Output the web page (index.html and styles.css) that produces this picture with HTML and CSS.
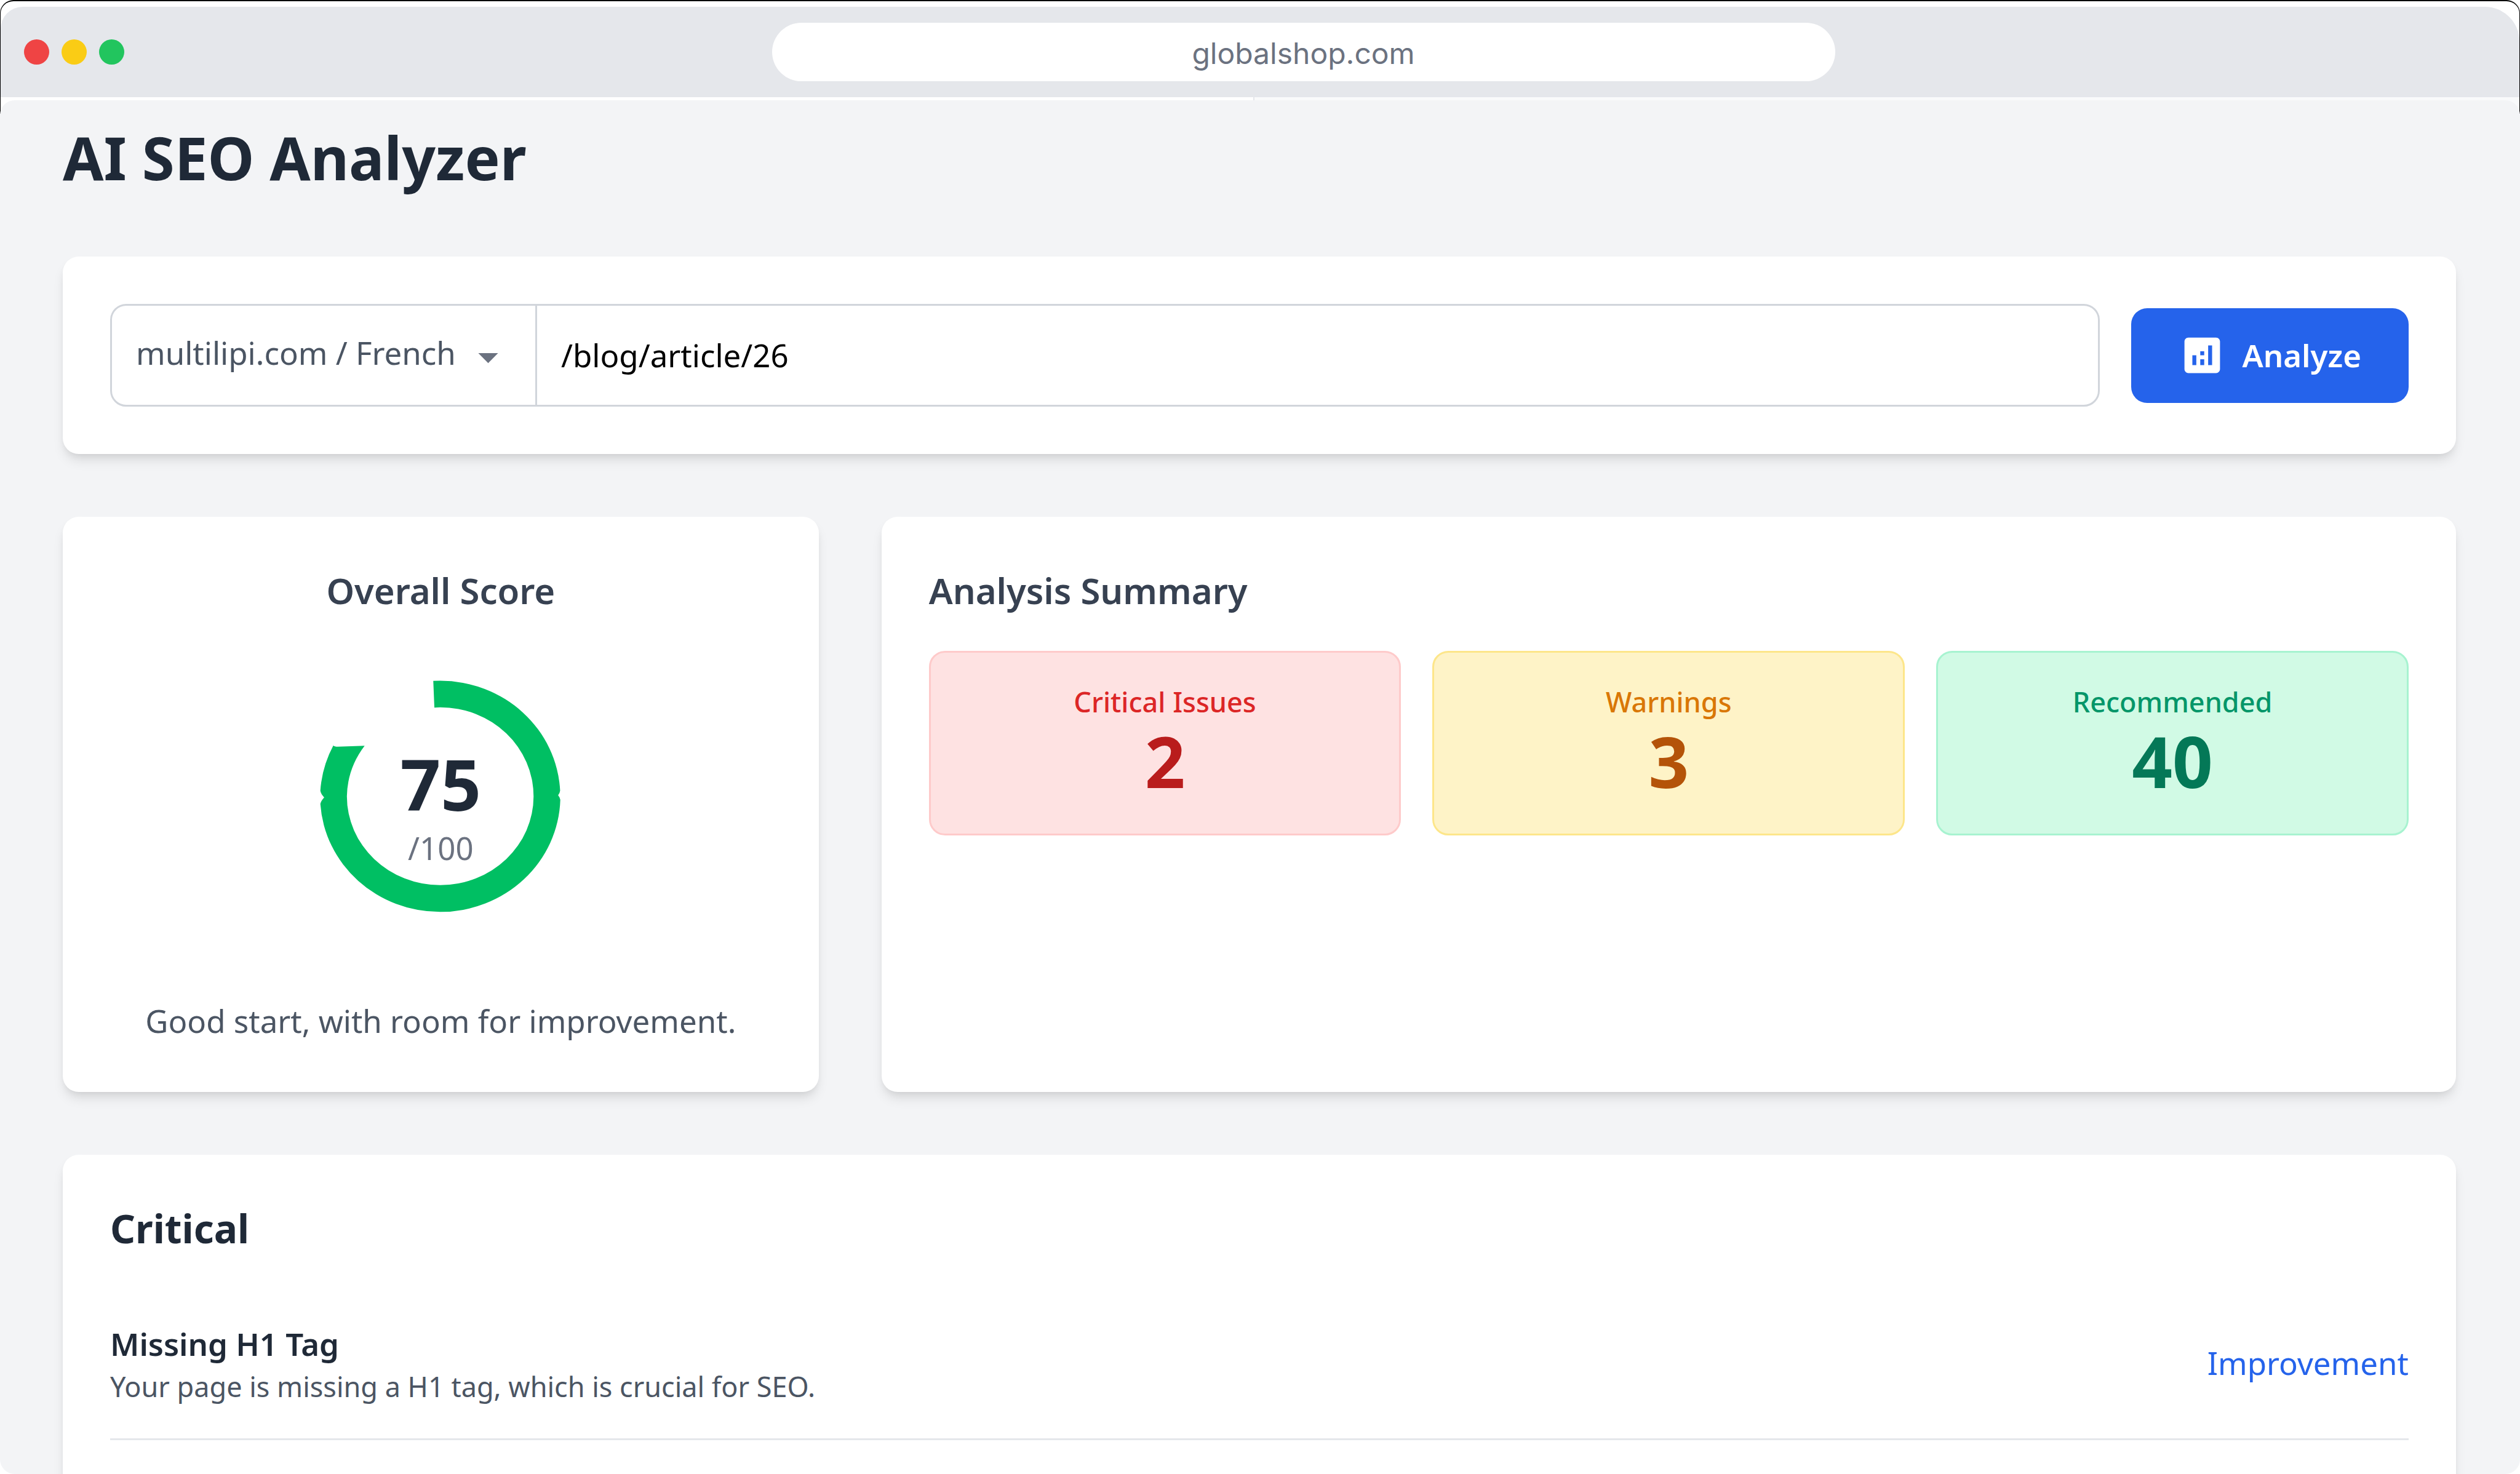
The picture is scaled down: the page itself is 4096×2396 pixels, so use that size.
FILE: index.html
```html
<!DOCTYPE html>
<html lang="en">
<head>
  <meta charset="UTF-8">
  <meta name="viewport" content="width=device-width, initial-scale=1.0">
  <title>AI SEO Analyzer</title>
  <link rel="stylesheet" href="styles.css">
</head>
<body>
  <!-- Browser frame -->
  <header class="browser">
    <div class="browser-bar">
      <div class="dots">
        <span class="dot red"></span>
        <span class="dot yellow"></span>
        <span class="dot green"></span>
      </div>
      <input class="address" type="text" value="globalshop.com" aria-label="Address">
    </div>
    <div class="browser-edge">
      <span class="edge-left"></span>
      <span class="edge-right"></span>
    </div>
  </header>

  <main class="page">
    <h1>AI SEO Analyzer</h1>

    <!-- URL form -->
    <form class="card url-form">
      <div class="url-group">
        <div class="site">
          <select aria-label="Site and language">
            <option>multilipi.com / French</option>
          </select>
          <svg class="icon arrow" viewBox="0 0 24 24" aria-hidden="true"><path d="M7 10l5 5 5-5z"/></svg>
        </div>
        <input class="path" type="text" value="/blog/article/26" aria-label="Page path">
      </div>
      <button class="analyze" type="button">
        <svg class="icon" viewBox="0 0 24 24" aria-hidden="true"><path d="M19 3H5c-1.1 0-2 .9-2 2v14c0 1.1.9 2 2 2h14c1.1 0 2-.9 2-2V5c0-1.1-.9-2-2-2zM9 17H7v-5h2v5zm4 0h-2v-3h2v3zm0-5h-2v-2h2v2zm4 5h-2V7h2v10z"/></svg>
        Analyze
      </button>
    </form>

    <div class="overview">
      <section class="card score">
        <h2>Overall Score</h2>
        <div class="chart">
          <svg class="ring" viewBox="-74 -16 1721 1782" preserveAspectRatio="none" aria-hidden="true">
            <path d="M747 154 Q766 153 785 153 A656 654 0 0 1 1440 775 Q1438 790 1429 801 Q1438 811 1441 826 A656 654 0 0 1 785 1461 A656 654 0 0 1 130 850 Q133 833 151 813 Q133 794 130 775 A656 654 0 0 1 201 519 Q207 526 225 526 L372 521 A510 502 0 0 0 275 807 A510 502 0 0 0 785 1309 A510 502 0 0 0 1295 807 A510 504 0 0 0 785 303 L753 305 Z"/>
          </svg>
          <div class="score-text">
            <span class="score-value">75</span>
            <span class="score-max">/100</span>
          </div>
        </div>
        <p>Good start, with room for improvement.</p>
      </section>

      <section class="card summary">
        <h2>Analysis Summary</h2>
        <div class="stats">
          <div class="stat critical">
            <p class="stat-label">Critical Issues</p>
            <p class="stat-value">2</p>
          </div>
          <div class="stat warning">
            <p class="stat-label">Warnings</p>
            <p class="stat-value">3</p>
          </div>
          <div class="stat recommended">
            <p class="stat-label">Recommended</p>
            <p class="stat-value">40</p>
          </div>
        </div>
      </section>
    </div>

    <!-- Issues -->
    <section class="card issues">
      <h2>Critical</h2>
      <ul>
        <li>
          <div>
            <h3>Missing H1 Tag</h3>
            <p>Your page is missing a H1 tag, which is crucial for SEO.</p>
          </div>
          <a href="#">Improvement</a>
        </li>
      </ul>
    </section>
  </main>
</body>
</html>
```

FILE: styles.css
```css
* {
  box-sizing: border-box;
  margin: 0;
  padding: 0;
}

body {
  display: flex;
  flex-direction: column;
  height: 100vh;
  overflow: hidden;
  background: #fff;
  color: #1f2937;
  font-family: "Noto Sans", sans-serif;
  font-size: 51px;
  line-height: 77px;
}

input,
select,
button {
  font: inherit;
  border: 0;
  outline: 0;
  background: transparent;
}

.icon {
  width: 77px;
  height: 77px;
  fill: currentColor;
}

/* Browser frame */
.browser {
  flex: none;
  padding-top: 9px;
  border: solid #000;
  border-width: 2px 1px 0;
  border-radius: 22px 22px 0 0;
}

.browser-bar {
  display: flex;
  align-items: center;
  height: 147px;
  padding: 0 60px 0 38px;
  background: #e5e7eb;
  border-radius: 36px 56px 0 0;
}

.dots {
  display: flex;
  gap: 20px;
}

.dot {
  width: 41px;
  height: 41px;
  border-radius: 50%;
}

.red {
  background: #ef4444;
}

.yellow {
  background: #facc15;
}

.green {
  background: #22c55e;
}

.address {
  width: 100%;
  max-width: 1728px;
  height: 95px;
  margin: 0 auto;
  padding-top: 4px;
  border-radius: 48px;
  background: #fff;
  color: #6b7280;
  font-family: Inter, sans-serif;
  font-size: 48px;
  text-align: center;
}

.browser-edge {
  display: flex;
  height: 27px;
}

.edge-left {
  width: 50%;
  margin-right: -11px;
}

.edge-right {
  flex: 1;
  border-left: 2px solid #e5e7eb;
  background: #f9fafb;
}

/* Page */
.page {
  flex: 1;
  display: flex;
  flex-direction: column;
  min-height: 0;
  margin-top: -22px;
  padding: 35px 104px 0 102px;
  border-radius: 24px;
  background: #f3f4f6;
  overflow: hidden;
}

h1 {
  margin-bottom: 104px;
  font-size: 96px;
  font-weight: 700;
  line-height: 115px;
}

.card {
  padding: 77px;
  border-radius: 26px;
  background: #fff;
  box-shadow: 0 13px 19px -3px rgba(0, 0, 0, 0.1), 0 6px 13px -6px rgba(0, 0, 0, 0.1);
}

.url-form {
  display: flex;
  align-items: center;
  gap: 51px;
}

.url-group {
  flex: 1;
  display: flex;
  height: 167px;
  border: 3px solid #d1d5db;
  border-radius: 26px;
}

.site {
  position: relative;
  border-right: 3px solid #d1d5db;
  color: #6b7280;
}

.site select {
  height: 100%;
  padding: 0 129px 8px 39px;
  appearance: none;
  color: #4b5563;
}

.arrow {
  position: absolute;
  top: 45px;
  right: 38px;
  pointer-events: none;
}

.path {
  flex: 1;
  padding: 0 39px;
  color: #000;
}

.analyze {
  display: flex;
  align-items: center;
  gap: 26px;
  height: 154px;
  padding: 0 77px;
  border-radius: 26px;
  background: #2563eb;
  color: #fff;
  font-weight: 600;
}

.overview {
  display: grid;
  grid-template-columns: repeat(3, 1fr);
  gap: 102px;
  margin: 102px 0;
}

h2 {
  margin-bottom: 55px;
  color: #374151;
  font-size: 58px;
  font-weight: 600;
  line-height: 86px;
}

.score {
  text-align: center;
}

.chart {
  display: grid;
  place-items: center;
  margin-bottom: 51px;
}

.ring,
.score-text {
  grid-area: 1 / 1;
}

.ring {
  width: 512px;
  height: 512px;
  fill: #00bf63;
}

.score-text {
  display: flex;
  flex-direction: column;
}

.score-value {
  margin-bottom: 4px;
  font-size: 115px;
  font-weight: 700;
  line-height: 124px;
}

.score-max {
  color: #6b7280;
}

.score p {
  color: #4b5563;
}

.summary {
  grid-column: span 2;
}

.stats {
  display: grid;
  grid-template-columns: repeat(3, 1fr);
  gap: 51px;
}

.stat {
  padding: 48px 51px 54px;
  border: 3px solid;
  border-radius: 26px;
  text-align: center;
}

.stat-label {
  font-size: 45px;
  font-weight: 500;
  line-height: 64px;
}

.stat-value {
  font-size: 115px;
  font-weight: 700;
  line-height: 128px;
}

.critical {
  border-color: #fecaca;
  background: #fee2e2;
  color: #dc2626;
}

.critical .stat-value {
  color: #b91c1c;
}

.warning {
  border-color: #fde68a;
  background: #fef3c7;
  color: #d97706;
}

.warning .stat-value {
  color: #b45309;
}

.recommended {
  border-color: #a7f3d0;
  background: #d1fae5;
  color: #059669;
}

.recommended .stat-value {
  color: #047857;
}

/* Issues */
.issues {
  flex: 1;
  border-radius: 26px 26px 0 0;
}

.issues h2 {
  color: #1f2937;
  font-size: 64px;
  font-weight: 700;
}

.issues ul {
  list-style: none;
}

.issues li {
  display: flex;
  align-items: center;
  justify-content: space-between;
  padding: 51px 0 53px;
  border-bottom: 3px solid #e5e7eb;
}

.issues h3 {
  font-size: 51px;
  font-weight: 600;
}

.issues p {
  color: #4b5563;
  font-size: 45px;
  line-height: 62px;
}

.issues a {
  color: #2563eb;
  text-decoration: none;
}
```
